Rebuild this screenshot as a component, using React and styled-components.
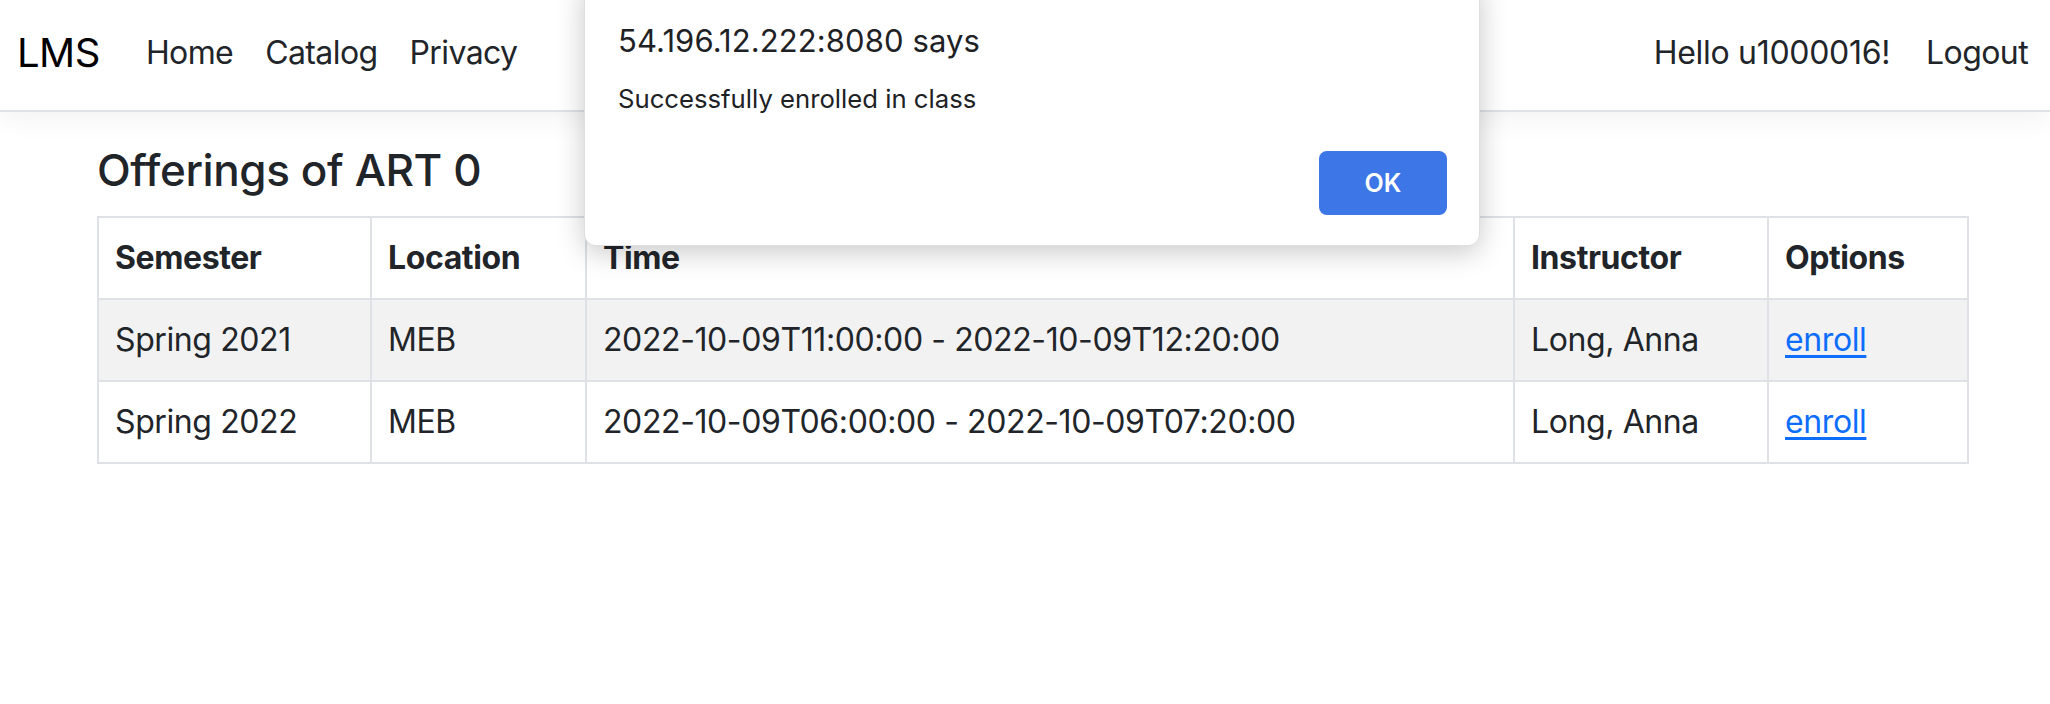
import React from "react";
import styled, { createGlobalStyle } from "styled-components";

const GlobalStyle = createGlobalStyle`
    body{
        margin: 0;
        background: #fff;
        color: #212529;
        font-family: Inter, "Noto Sans", "Liberation Sans", sans-serif;
    }
`;

const offerings = [
    { semester: "Spring 2021", location: "MEB", time: "2022-10-09T11:00:00 - 2022-10-09T12:20:00", instructor: "Long, Anna" },
    { semester: "Spring 2022", location: "MEB", time: "2022-10-09T06:00:00 - 2022-10-09T07:20:00", instructor: "Long, Anna" },
];

const columns = [
    { label: "Semester", width: 273 },
    { label: "Location", width: 215 },
    { label: "Time", width: 928 },
    { label: "Instructor", width: 254 },
    { label: "Options", width: 200 },
];

function App() {
    return (
        <Page>
            <GlobalStyle />
            <Navbar>
                <Brand>LMS</Brand>
                <NavLinks>
                    <NavLink>Home</NavLink>
                    <NavLink>Catalog</NavLink>
                    <NavLink>Privacy</NavLink>
                </NavLinks>
                <UserArea>
                    <Greeting>Hello u1000016!</Greeting>
                    <NavLink>Logout</NavLink>
                </UserArea>
            </Navbar>

            <Main>
                <Title>Offerings of ART 0</Title>
                <Table>
                    <colgroup>
                        {columns.map((c) => <col key={c.label} width={c.width} />)}
                    </colgroup>
                    <thead>
                        <tr>
                            {columns.map((c) => <th key={c.label}>{c.label}</th>)}
                        </tr>
                    </thead>
                    <tbody>
                        {offerings.map((o, i) => (
                            <Row key={o.semester} striped={i % 2 === 0}>
                                <td>{o.semester}</td>
                                <td>{o.location}</td>
                                <td>{o.time}</td>
                                <td>{o.instructor}</td>
                                <td><EnrollLink href="#">enroll</EnrollLink></td>
                            </Row>
                        ))}
                    </tbody>
                </Table>
            </Main>

            <Alert>
                <AlertTitle>54.196.12.222:8080 says</AlertTitle>
                <AlertMessage>Successfully enrolled in class</AlertMessage>
                <AlertActions>
                    <OkButton>OK</OkButton>
                </AlertActions>
            </Alert>
        </Page>
    );
}

const Page = styled.div`
    position: relative;
    min-height: 704px;
`;

const Navbar = styled.nav`
    display: flex;
    align-items: center;
    box-sizing: border-box;
    height: 112px;
    padding: 0 6px 6px 17px;
    border-bottom: 2px solid #dee2e6;
    box-shadow: 0 8px 24px rgba(0, 0, 0, 0.05);
    background: #fff;
`;

const Brand = styled.a`
    font-size: 40px;
    color: #000;
    margin-right: 30px;
    letter-spacing: -0.5px;
`;

const NavLinks = styled.div`
    display: flex;
    flex: 1;
`;

const NavLink = styled.a`
    font-size: 32px;
    color: #212529;
    padding: 0 16px;
    letter-spacing: -0.6px;
    cursor: pointer;
`;

const UserArea = styled.div`
    display: flex;
    align-items: center;
`;

const Greeting = styled.span`
    font-size: 32px;
    color: #212529;
    padding-right: 20px;
    letter-spacing: -0.3px;
`;

const Main = styled.main`
    padding: 32px 83px 0 97px;
`;

const Title = styled.h3`
    margin: 0 0 19px;
    font-size: 44px;
    font-weight: 500;
    line-height: 1.2;
    letter-spacing: -0.4px;
`;

const Table = styled.table`
    width: 1870px;
    table-layout: fixed;
    border-collapse: collapse;
    font-size: 32px;
    line-height: 48px;

    th, td{
        border: 2px solid #dee2e6;
        padding: 16px 16px;
        text-align: left;
        white-space: nowrap;
        letter-spacing: -0.4px;
    }
    th{
        font-weight: 700;
    }
`;

const Row = styled.tr`
    background: ${(p) => (p.striped ? "#f2f2f2" : "#fff")};
`;

const EnrollLink = styled.a`
    color: #0d6efd;
    text-decoration: underline;
    text-underline-offset: 4px;
`;

const Alert = styled.div`
    position: absolute;
    top: -20px;
    left: 584px;
    width: 896px;
    height: 266px;
    box-sizing: border-box;
    padding: 40px 32px 0 33px;
    background: #fff;
    border: 1px solid rgba(0, 0, 0, 0.12);
    border-radius: 12px;
    box-shadow: 0 6px 28px rgba(0, 0, 0, 0.22);
`;

const AlertTitle = styled.div`
    font-size: 31px;
    line-height: 40px;
    color: #202124;
    letter-spacing: 0.1px;
`;

const AlertMessage = styled.div`
    margin-top: 20px;
    font-size: 25.7px;
    line-height: 36px;
    color: #202124;
`;

const AlertActions = styled.div`
    display: flex;
    justify-content: flex-end;
    margin-top: 34px;
`;

const OkButton = styled.button`
    width: 128px;
    height: 64px;
    border: none;
    border-radius: 8px;
    background: #3c76e7;
    color: #fff;
    font-family: Inter, "Noto Sans", sans-serif;
    font-size: 25px;
    font-weight: 600;
`;

export default App;
